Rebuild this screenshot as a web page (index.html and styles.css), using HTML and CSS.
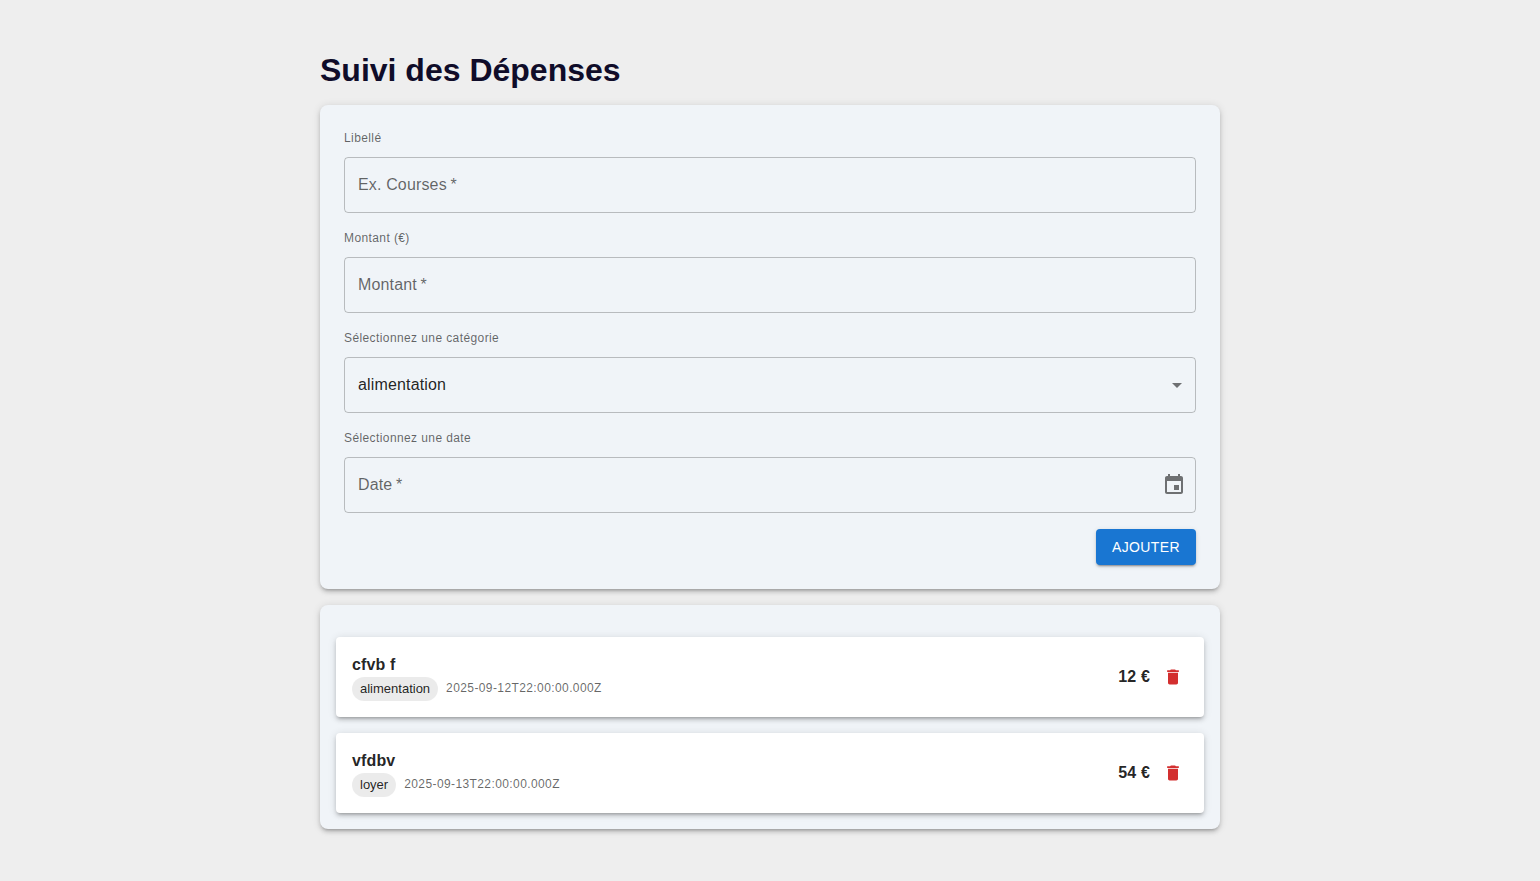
FILE: index.html
```
<!DOCTYPE html>
<html lang="fr">
<head>
<meta charset="utf-8">
<title>Suivi des Dépenses</title>
<link rel="stylesheet" href="styles.css">
</head>
<body>
<main class="container">
  <h1 class="title">Suivi des Dépenses</h1>
  <form class="paper form">
    <div class="group">
      <span class="caption">Libellé</span>
      <div class="field"><span class="placeholder">Ex. Courses<span class="star"> *</span></span></div>
    </div>
    <div class="group">
      <span class="caption">Montant (€)</span>
      <div class="field"><span class="placeholder">Montant<span class="star"> *</span></span></div>
    </div>
    <div class="group">
      <span class="caption">Sélectionnez une catégorie</span>
      <div class="field field-select"><span>alimentation</span>
        <svg class="icon" viewBox="0 0 24 24"><path d="M7 10l5 5 5-5z"/></svg>
      </div>
    </div>
    <div class="group">
      <span class="caption">Sélectionnez une date</span>
      <div class="field field-date"><span class="placeholder">Date<span class="star"> *</span></span>
        <svg class="icon" viewBox="0 0 24 24"><path d="M17 12h-5v5h5v-5zM16 1v2H8V1H6v2H5c-1.11 0-1.99.9-1.99 2L3 19c0 1.1.89 2 2 2h14c1.1 0 2-.9 2-2V5c0-1.1-.9-2-2-2h-1V1h-2zm3 18H5V8h14v11z"/></svg>
      </div>
    </div>
    <div class="actions"><button class="button" type="button">Ajouter</button></div>
  </form>
  <section class="paper list">
    <article class="card">
      <div class="info">
        <div class="name">cfvb f</div>
        <div class="meta"><span class="chip">alimentation</span><span class="caption date">2025-09-12T22:00:00.000Z</span></div>
      </div>
      <div class="amount">12 €</div>
      <svg class="trash" viewBox="0 0 24 24"><path d="M6 19c0 1.1.9 2 2 2h8c1.1 0 2-.9 2-2V7H6v12zM19 4h-3.5l-1-1h-5l-1 1H5v2h14V4z"/></svg>
    </article>
    <article class="card">
      <div class="info">
        <div class="name">vfdbv</div>
        <div class="meta"><span class="chip">loyer</span><span class="caption date">2025-09-13T22:00:00.000Z</span></div>
      </div>
      <div class="amount">54 €</div>
      <svg class="trash" viewBox="0 0 24 24"><path d="M6 19c0 1.1.9 2 2 2h8c1.1 0 2-.9 2-2V7H6v12zM19 4h-3.5l-1-1h-5l-1 1H5v2h14V4z"/></svg>
    </article>
  </section>
</main>
</body>
</html>
```

FILE: styles.css
```
* { box-sizing: border-box; }
body {
  margin: 0;
  min-height: 100vh;
  background: #eee;
  color: rgba(0, 0, 0, 0.87);
  font: 400 16px/24px "Liberation Sans", Arial, sans-serif;
  letter-spacing: 0.15px;
}
.container {
  width: 900px;
  margin: 0 auto;
  padding-top: 48px;
  display: flex;
  flex-direction: column;
}
.title {
  margin: 0 0 13px;
  color: #0f0c29;
  font-size: 32px;
  line-height: 44px;
  font-weight: 700;
  letter-spacing: 0;
}
.paper, .card {
  box-shadow: 0 3px 3px -2px rgba(0,0,0,.2), 0 3px 4px 0 rgba(0,0,0,.14), 0 1px 8px 0 rgba(0,0,0,.12);
}
.paper {
  background: #f0f4f8;
  border-radius: 8px;
}
.form {
  height: 484px;
  padding: 24px;
  display: flex;
  flex-direction: column;
  gap: 16px;
}
.group {
  display: flex;
  flex-direction: column;
  gap: 10px;
}
.caption {
  color: rgba(0, 0, 0, 0.6);
  font-size: 12px;
  line-height: 18px;
  letter-spacing: 0.4px;
}
.field {
  height: 56px;
  padding: 0 13px;
  display: flex;
  align-items: center;
  justify-content: space-between;
  border: 1px solid rgba(0, 0, 0, 0.23);
  border-radius: 4px;
}
.placeholder { color: rgba(0, 0, 0, 0.6); }
.star { margin-left: -1px; }
.field-select { padding-right: 6px; }
.field-date { padding-right: 9px; }
.icon {
  width: 24px;
  height: 24px;
  fill: rgba(0, 0, 0, 0.54);
}
.actions { display: flex; justify-content: flex-end; }
.button {
  width: 100px;
  height: 36px;
  padding: 0;
  border: 0;
  border-radius: 4px;
  background: #1976d2;
  color: #fff;
  font: 500 14px/24px "Liberation Sans", Arial, sans-serif;
  letter-spacing: 0.4px;
  text-transform: uppercase;
  box-shadow: 0 3px 1px -2px rgba(0,0,0,.2), 0 2px 2px 0 rgba(0,0,0,.14), 0 1px 5px 0 rgba(0,0,0,.12);
}
.list {
  margin-top: 16px;
  padding: 32px 16px 16px;
  display: flex;
  flex-direction: column;
  gap: 16px;
}
.card {
  height: 80px;
  padding: 16px 21px 16px 16px;
  display: flex;
  align-items: center;
  background: #fff;
  border-radius: 4px;
}
.info { flex: 1; }
.name, .amount { font-weight: 700; }
.meta { display: flex; gap: 8px; }
.date { line-height: 22px; }
.chip {
  height: 24px;
  padding: 0 8px;
  border-radius: 12px;
  background: rgba(0, 0, 0, 0.08);
  font-size: 13px;
  letter-spacing: 0;
}
.amount { margin-right: 13px; }
.trash {
  width: 20px;
  height: 20px;
  fill: #d32f2f;
}
```
